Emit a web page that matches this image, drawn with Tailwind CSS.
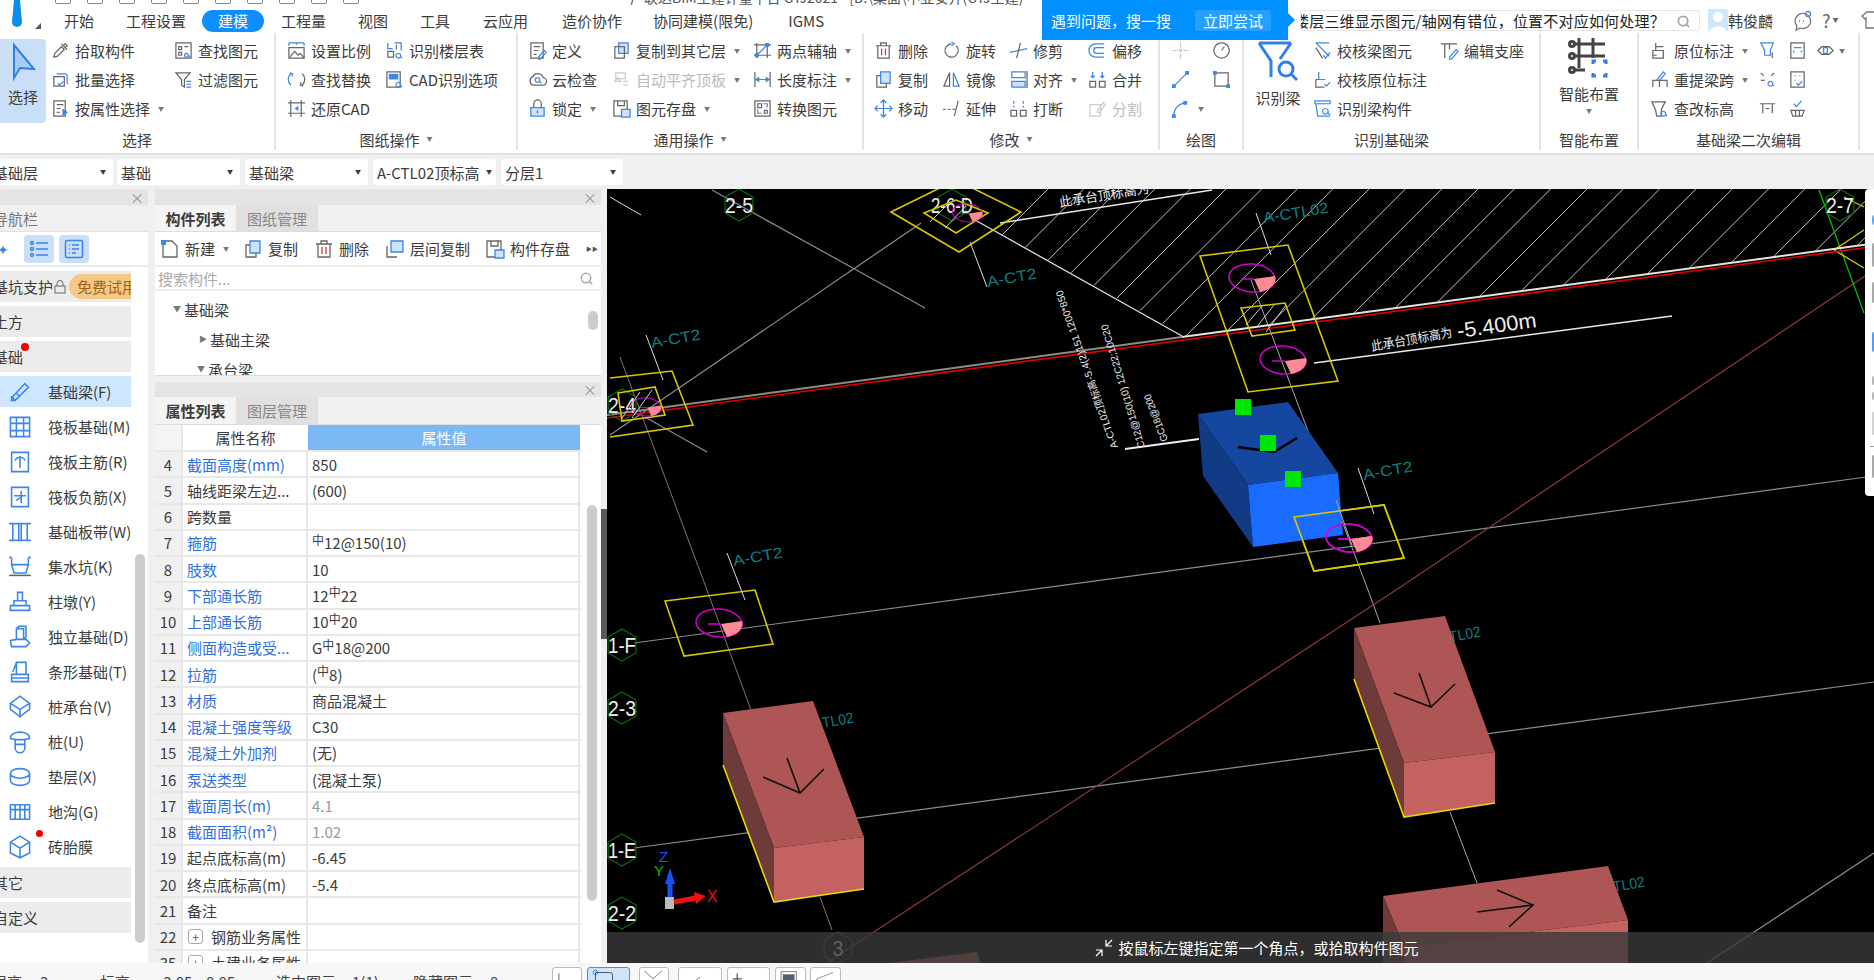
<!DOCTYPE html>
<html lang="zh-CN">
<head>
<meta charset="UTF-8">
<title>GTJ2021</title>
<script src="https://cdn.jsdelivr.net/npm/@tailwindcss/browser@4"></script>
</head>
<body class="w-[1874px] h-[980px] overflow-hidden bg-[#f0f0f0] text-[15px] leading-none text-[#3c3c3c] font-['Noto_Sans_CJK_SC','Noto_Sans',sans-serif]">

<!-- title strip, cut off by the top of the window -->
<header class="relative h-[8px] bg-white overflow-hidden flex">
  <div id="quick" class="flex gap-[16px] ml-[55px] -mt-[12px]"></div>
  <span class="absolute left-[630px] -top-[10px] text-[14px] text-[#555]">广联达BIM土建计量平台 GTJ2021 - [D:\桌面\中亚安井(GTJ土建)</span>
</header>

<!-- tabs -->
<nav class="relative h-[25px] bg-white flex items-center pl-[48px]">
  <svg class="absolute left-[8px] -top-[8px] w-[18px] h-[32px]" viewBox="0 0 18 32"><path d="M6 0h6l2 22a5 5 0 0 1-10 0z" fill="#0a8ee8"/></svg>
  <svg class="absolute left-[35px] top-[15px] w-[6px] h-[6px]" viewBox="0 0 6 6"><path d="M6 0v6H0z" fill="#555"/></svg>
  <span class="px-[16px]">开始</span>
  <span class="px-[16px]">工程设置</span>
  <span class="h-[22px] w-[62px] flex items-center justify-center rounded-full bg-[#0f8fff] text-white">建模</span>
  <span class="px-[17px]">工程量</span>
  <span class="px-[15px]">视图</span>
  <span class="px-[17px]">工具</span>
  <span class="pl-[16px] pr-[19px]">云应用</span>
  <span class="px-[15px]">造价协作</span>
  <span class="px-[16px]">协同建模(限免)</span>
  <span class="pl-[19px] pr-[18px]">IGMS</span>
</nav>

<!-- blue search hint and the search box lying over the title bar -->
<div class="absolute left-[1042px] top-0 w-[246px] h-[40px] bg-[#0090ff] text-white flex items-center pl-[9px] z-20">
  <span>遇到问题，搜一搜</span>
  <span class="ml-[24px] h-[21px] px-[8px] flex items-center bg-white/15 rounded-[2px]">立即尝试</span>
  <span class="absolute -right-[7px] top-[13px] border-y-[7px] border-y-transparent border-l-[7px] border-l-[#0090ff]"></span>
</div>
<div class="absolute left-[1300px] top-[10px] w-[400px] h-[21px] bg-white border border-[#e6e6e6] rounded-[3px] flex items-center overflow-hidden z-10 text-[#222]">
  <span class="whitespace-nowrap -ml-[7px] tracking-[0.2px]">楼层三维显示图元/轴网有错位，位置不对应如何处理？</span>
  <svg class="absolute right-[8px] top-[3px] w-[15px] h-[15px]" viewBox="0 0 16 16" fill="none" stroke="#aaa" stroke-width="2"><circle cx="7.5" cy="7.5" r="5"/><path d="M11 11l3 3"/></svg>
</div>
<div class="absolute left-[1708px] top-[8px] h-[24px] flex items-center z-10 whitespace-nowrap">
  <svg class="w-[20px] h-[22px] shrink-0" viewBox="0 0 20 22"><rect width="20" height="22" fill="#cfe6fb"/><circle cx="10" cy="8" r="5" fill="#fff"/><path d="M2 22c1-6 15-6 16 0z" fill="#fff"/></svg>
  <span class="shrink-0">韩俊麟</span>
  <svg class="ml-[19px] w-[22px] h-[22px] shrink-0" viewBox="0 0 22 22" fill="none" stroke="#777" stroke-width="1.3"><path d="M3 12a8 8 0 0 1 11-7 8 8 0 0 1 4 10 8 8 0 0 1-10 4l-4 2 1-4a8 8 0 0 1-2-5z"/><circle cx="16" cy="5" r="2.5" stroke="#4a90e2"/><path d="M7 12h1M11 12h1"/></svg>
  <span class="ml-[8px] text-[18px] text-[#666]">?</span>
  <span class="ml-[2px] text-[6px] text-[#666]">▼</span>
  <svg class="ml-[21px] w-[22px] h-[22px] shrink-0" viewBox="0 0 22 22" fill="none" stroke="#777" stroke-width="1.3"><path d="M7 3h8l5 4-3 3-1-1v10H6V9l-1 1-3-3z"/></svg>
</div>

<!-- ribbon -->
<section id="ribbon" class="relative h-[122px] bg-white border-b-2 border-[#e2e2e2] flex"></section>

<!-- layer selectors -->
<div class="h-[34px] bg-[#f0f0f0] flex items-center gap-[4px] overflow-hidden">
  <div class="w-[113px] h-[26px] bg-white rounded-[3px] flex items-center justify-between pr-[7px]"><span class="-ml-[7px]">基础层</span><span class="text-[6px]">▼</span></div>
  <div class="w-[123px] h-[26px] bg-white rounded-[3px] flex items-center justify-between pl-[4px] pr-[7px]"><span>基础</span><span class="text-[6px]">▼</span></div>
  <div class="w-[123px] h-[26px] ml-[1px] bg-white rounded-[3px] flex items-center justify-between pl-[4px] pr-[7px]"><span>基础梁</span><span class="text-[6px]">▼</span></div>
  <div class="w-[123px] h-[26px] ml-[1px] bg-white rounded-[3px] flex items-center justify-between pl-[4px] pr-[4px]"><span class="whitespace-nowrap">A-CTL02顶标高</span><span class="text-[6px]">▼</span></div>
  <div class="w-[122px] h-[26px] ml-[1px] bg-white rounded-[3px] flex items-center justify-between pl-[4px] pr-[7px]"><span>分层1</span><span class="text-[6px]">▼</span></div>
</div>

<main class="h-[774px] flex">
  <!-- navigation -->
  <aside class="relative w-[148px] shrink-0 bg-white overflow-hidden">
    <div class="h-[16px] bg-[#e4e4e4] relative"><span class="absolute right-[4px] top-[1px] text-[14px] text-[#999]">×</span></div>
    <div class="h-[27px] bg-[#f0f0f0] flex items-center text-[#777] border-b border-[#e2e2e2]"><span class="-ml-[7px]">导航栏</span></div>
    <div class="h-[35px] flex items-center border-b-2 border-[#eaeaea]">
      <span class="-ml-[3px] text-[#3b86e8] text-[14px] w-[27px]">✦</span>
      <span class="w-[30px] h-[28px] bg-[#c9def7] rounded-[4px] flex items-center justify-center"><svg class="w-[20px] h-[20px]" viewBox="0 0 20 20" fill="none" stroke="#3b86e8" stroke-width="1.5"><circle cx="3" cy="4" r="1.4"/><circle cx="3" cy="10" r="1.4"/><circle cx="3" cy="16" r="1.4"/><path d="M7 4h12M7 10h12M7 16h12"/></svg></span>
      <span class="ml-[5px] w-[30px] h-[28px] bg-[#c9def7] rounded-[4px] flex items-center justify-center"><svg class="w-[20px] h-[20px]" viewBox="0 0 20 20" fill="none" stroke="#3b86e8" stroke-width="1.5"><rect x="1.5" y="1.5" width="17" height="17" rx="1.5"/><path d="M5 6h1M8 6h7M5 10h1M8 10h7M5 14h1M8 14h4"/></svg></span>
    </div>
    <div class="w-[131px] mt-[4px] flex flex-col gap-[4px]">
      <div class="relative h-[31px] bg-[#ececec] flex items-center overflow-hidden">
        <span class="-ml-[7px] whitespace-nowrap">基坑支护</span>
        <svg class="ml-[1px] w-[12px] h-[14px] shrink-0" viewBox="0 0 12 14" fill="none" stroke="#666"><rect x="1" y="6" width="10" height="7"/><path d="M3 6V3.5a3 3 0 0 1 6 0V6"/></svg>
        <span class="absolute left-[69px] top-[3px] w-[66px] h-[25px] bg-[#f3c888] rounded-l-full pl-[8px] flex items-center whitespace-nowrap text-[#a5610f]">免费试用</span>
      </div>
      <div class="h-[31px] bg-[#ececec] flex items-center"><span class="-ml-[7px]">土方</span></div>
      <div class="relative h-[31px] bg-[#ececec] flex items-center"><span class="-ml-[7px]">基础</span><span class="absolute left-[21px] top-[2px] w-[8px] h-[8px] rounded-full bg-[#f00000]"></span></div>
    </div>
    <div id="navList" class="w-[131px] mt-[4px] mb-[3px] flex flex-col"></div>
    <div class="w-[131px] flex flex-col gap-[4px]">
      <div class="h-[31px] bg-[#ececec] flex items-center"><span class="-ml-[7px]">其它</span></div>
      <div class="h-[31px] bg-[#ececec] flex items-center"><span class="-ml-[7px]">自定义</span></div>
    </div>
    <div class="absolute left-[135px] top-[365px] w-[10px] h-[389px] rounded-full bg-[#cccccc]"></div>
  </aside>
  <div class="w-[7px] shrink-0 bg-[#f0f0f0]"></div>

  <!-- component list and properties -->
  <div class="w-[446px] shrink-0 flex flex-col gap-[6px]">
    <div class="relative h-[187px] bg-white border-b border-[#ddd] overflow-hidden">
      <div class="h-[16px] bg-[#e4e4e4] relative"><span class="absolute right-[4px] top-[1px] text-[14px] text-[#999]">×</span></div>
      <div class="h-[27px] flex bg-[#f0f0f0] border-b border-[#ddd]">
        <span class="w-[81px] flex items-center justify-center font-bold bg-[#f4f4f4]">构件列表</span>
        <span class="w-[82px] flex items-center justify-center bg-[#e0e0e0] text-[#888]">图纸管理</span>
      </div>
      <div id="compBar" class="relative h-[35px] flex items-center pl-[5px] border-b-2 border-[#eee]"></div>
      <div class="relative h-[24px] flex items-center pl-[3px] text-[#aaa] border-b-2 border-[#eee]">搜索构件...
        <svg class="absolute right-[7px] top-[4px] w-[15px] h-[15px]" viewBox="0 0 16 16" fill="none" stroke="#aaa" stroke-width="1.6"><circle cx="7.5" cy="7.5" r="5"/><path d="M11 11l3 3"/></svg>
      </div>
      <div class="relative pt-[3px]">
        <div class="h-[30px] flex items-center pl-[18px]"><span class="text-[8px] text-[#777] mr-[3px]">▼</span>基础梁</div>
        <div class="h-[30px] flex items-center pl-[44px]"><span class="text-[8px] text-[#777] mr-[3px]">▶</span>基础主梁</div>
        <div class="h-[30px] flex items-center pl-[42px]"><span class="text-[8px] text-[#777] mr-[3px]">▼</span>承台梁</div>
        <div class="absolute left-[433px] top-[20px] w-[10px] h-[19px] rounded-full bg-[#ccc]"></div>
      </div>
    </div>
    <div class="relative flex-1 bg-white overflow-hidden">
      <div class="h-[15px] bg-[#e4e4e4] relative"><span class="absolute right-[4px] top-0 text-[14px] text-[#999]">×</span></div>
      <div class="h-[28px] flex bg-[#f0f0f0] border-b border-[#ddd]">
        <span class="w-[81px] flex items-center justify-center font-bold bg-[#f4f4f4]">属性列表</span>
        <span class="w-[82px] flex items-center justify-center bg-[#e0e0e0] text-[#888]">图层管理</span>
      </div>
      <div class="h-[25px] flex items-stretch">
        <span class="w-[28px] bg-[#f4f4f4] border-r-2 border-[#e6e6e6]"></span>
        <span class="w-[125px] flex items-center justify-center">属性名称</span>
        <span class="w-[272px] flex items-center justify-center bg-[#7cb8f6] text-white">属性值</span>
      </div>
      <div id="propRows" class="w-[426px]"></div>
      <div class="absolute left-[432px] top-[123px] w-[10px] h-[396px] rounded-full bg-[#ccc]"></div>
    </div>
  </div>
  <div class="w-[6px] shrink-0 bg-[#f0f0f0] flex flex-col"><span class="mt-[320px] h-[130px] bg-[#5a5a5a]"></span></div>

  <!-- drawing area -->
  <div class="relative flex-1 bg-black overflow-hidden">
    <svg id="cad" class="block w-[1267px] h-[774px]" viewBox="607 189 1267 774" fill="none" font-family="'Liberation Sans','Noto Sans CJK SC',sans-serif">
      <defs>
        <g id="pile">
          <ellipse rx="23" ry="14" stroke="#d000d0" stroke-width="1.5" transform="rotate(5)"/>
          <path d="M2 1 L23 -2 A23 14 0 0 1 8 14 Z" fill="#ff8a95"/>
          <path d="M-11 1 L2 1" stroke="#d000d0" stroke-width="1.5"/>
        </g>
      </defs>
      <g id="hatch" stroke="#c4c4c4" stroke-width="1"></g>
      <!-- axis lines -->
      <g stroke="#8c8c8c" stroke-width="1.2">
        <path d="M634 643L1874 476"/>
        <path d="M634 848L1874 682"/>
        <path d="M712 190L925 308"/>
        <path d="M921 223L610 435"/>
        <path d="M645 417L707 452"/>
        <path d="M1707 963L1874 853"/>
      </g>
      <path d="M610 197L641 215" stroke="#ddd"/>
      <path d="M975 220L1182 336" stroke="#ddd" stroke-width="1.3"/>
      <path d="M620 357L707 590L751 710M820 897L832 930" stroke="#8a7070"/>
      <path d="M1251 280L1368 590L1380 623M1450 812L1477 883" stroke="#aaa"/>
      <path d="M1874 270L1396 590L828 962" stroke="#8a3a3a" stroke-width="1.2"/>
      <path d="M1819 190L1864 313" stroke="#00c000" stroke-width="1.3"/>
      <path d="M1834 250L1864 230M1834 250L1864 268M1844 197L1864 207" stroke="#d8c800" stroke-width="1.3"/>

      <!-- slab edge -->
      <path d="M607 415L1182 337" stroke="#8c8c8c" stroke-width="2"/>
      <path d="M1182 337L1874 243.500" stroke="#e4e4e4" stroke-width="2"/>
      <path d="M607 418L1874 246.500" stroke="#e00000" stroke-width="1.6"/>

      <!-- level notes -->
      <path d="M1000 223L1212 190M1314 363L1672 316" stroke="#e8e8e8" stroke-width="1.5"/>
      <text x="1060" y="207" font-size="13" fill="#eee" transform="rotate(-9 1060 207)">此承台顶标高为</text>
      <text x="1372" y="351" font-size="13" fill="#eee" textLength="82" lengthAdjust="spacingAndGlyphs" transform="rotate(-10 1372 351)">此承台顶标高为</text>
      <text x="1458" y="338" font-size="21" fill="#eee" textLength="80" lengthAdjust="spacingAndGlyphs" transform="rotate(-8 1458 338)">-5.400m</text>
      <path d="M1125 449L1199 439" stroke="#eee" stroke-width="2"/>
      <g font-size="10" fill="#eee">
        <text x="1118" y="447" textLength="167" lengthAdjust="spacingAndGlyphs" transform="rotate(-109.600 1118 447)">A-CTL02顶标高-5.4(2)151 1200*850</text>
        <text x="1145" y="447" textLength="129" lengthAdjust="spacingAndGlyphs" transform="rotate(-107 1145 447)">C12@150(10) 12C22;10C20</text>
        <text x="1168" y="440" textLength="50" lengthAdjust="spacingAndGlyphs" transform="rotate(-111 1168 440)">GC18@200</text>
      </g>

      <!-- teal labels with leaders -->
      <g stroke="#ddd">
        <path d="M646 335L663 380M970 242L987 287M727 553L745 600M1358 468L1374 514M1256 213L1271 255"/>
      </g>
      <g font-size="15" fill="#0b7f82">
        <text x="652" y="348" textLength="50" lengthAdjust="spacingAndGlyphs" transform="rotate(-10 652 348)">A-CT2</text>
        <text x="988" y="287" textLength="50" lengthAdjust="spacingAndGlyphs" transform="rotate(-10 988 287)">A-CT2</text>
        <text x="734" y="566" textLength="50" lengthAdjust="spacingAndGlyphs" transform="rotate(-10 734 566)">A-CT2</text>
        <text x="1364" y="480" textLength="50" lengthAdjust="spacingAndGlyphs" transform="rotate(-10 1364 480)">A-CT2</text>
        <text x="1264" y="223" textLength="66" lengthAdjust="spacingAndGlyphs" transform="rotate(-9 1264 223)">A-CTL02</text>
        <text x="823" y="728" textLength="32" lengthAdjust="spacingAndGlyphs" transform="rotate(-10 823 728)">TL02</text>
        <text x="1450" y="642" textLength="32" lengthAdjust="spacingAndGlyphs" transform="rotate(-10 1450 642)">TL02</text>
        <text x="1614" y="892" textLength="32" lengthAdjust="spacingAndGlyphs" transform="rotate(-10 1614 892)">TL02</text>
      </g>

      <!-- axis bubbles -->
      <g id="bubbles" stroke="#0a6e0a" stroke-width="1.2"></g>

      <!-- pile caps -->
      <g stroke="#d8c800" stroke-width="1.6">
        <path d="M1200 256L1288 245L1338 381L1248 392Z"/>
        <path d="M1241 308L1285 303L1295 330L1252 336Z"/>
        <path d="M1294 517L1384 505L1404 558L1314 571Z"/>
        <path d="M665 601L755 590L773 644L684 656Z"/>
        <path d="M610 378L672 371L693 425L610 437"/>
        <path d="M618 393L655 387L665 415L622 421Z"/>
        <path d="M891 212L956 180L1021 212L959 252Z"/>
        <path d="M924 213L956 200L988 213L956 233Z"/>
      </g>
      <use href="#pile" x="1252" y="278"/>
      <use href="#pile" x="1283" y="360"/>
      <use href="#pile" x="1349" y="538"/>
      <use href="#pile" x="719" y="623"/>
      <use href="#pile" x="640" y="406" transform="translate(230 143) scale(.65)"/>
      <use href="#pile" x="956" y="212" transform="translate(346 75) scale(.65)"/>
      <path d="M1246 325L1262 306M1256 328L1274 305M1266 332L1286 305M622 418L640 392M632 418L652 390M930 222L948 204M945 228L966 206" stroke="#ccc"/>

      <!-- selected beam -->
      <path d="M1198 414L1288 402L1338 473L1248 485Z" fill="#1546a0"/>
      <path d="M1198 414L1248 485L1253 547L1203 476Z" fill="#123a85"/>
      <path d="M1248 485L1338 473L1343 535L1253 547Z" fill="#1a6bff"/>
      <path d="M1238 447L1274 452L1297 438" stroke="#000" stroke-width="2.500"/>
      <path d="M1294 517L1384 505L1404 558L1314 571Z" stroke="#d8c800" stroke-width="1.6"/>
      <use href="#pile" x="1349" y="538"/>
      <path d="M1336 500L1352 545" stroke="#aaa"/>
      <g fill="#00e600">
        <rect x="1235" y="399" width="16" height="16"/>
        <rect x="1260" y="435" width="16" height="16"/>
        <rect x="1285" y="471" width="16" height="16"/>
      </g>

      <!-- other beams -->
      <g>
        <path d="M723 713L813 701L864 837L774 848Z" fill="#ae5656"/>
        <path d="M723 713L774 848L774 902L723 765Z" fill="#6e3a3a"/>
        <path d="M774 848L864 837L864 889L774 902Z" fill="#c46262"/>
        <path d="M723 765L774 902L864 889" stroke="#e8d800" stroke-width="1.6"/>
        <path d="M787 758L800 793M763 777L800 793L824 769" stroke="#111" stroke-width="1.6"/>

        <path d="M1354 628L1445 616L1495 752L1404 763Z" fill="#ae5656"/>
        <path d="M1354 628L1404 763L1404 817L1354 679Z" fill="#6e3a3a"/>
        <path d="M1404 763L1495 752L1495 803L1404 817Z" fill="#c46262"/>
        <path d="M1354 679L1404 817L1495 803" stroke="#e8d800" stroke-width="1.6"/>
        <path d="M1419 673L1431 707M1394 693L1431 707L1455 684" stroke="#111" stroke-width="1.6"/>

        <path d="M1383 896L1608 866L1628 920L1404 947Z" fill="#ae5656"/>
        <path d="M1383 896L1404 947L1404 963L1383 963Z" fill="#6e3a3a"/>
        <path d="M1404 947L1628 920L1628 963L1404 963Z" fill="#c46262"/>
        <path d="M1477 912L1533 905M1497 890L1533 905L1509 927" stroke="#111" stroke-width="1.6"/>
        <path d="M888 963L977 952L981 963Z" fill="#ae5656"/>
      </g>

      <!-- axes gizmo -->
      <path d="M670 905V880" stroke="#00c000" stroke-width="3"/>
      <path d="M670 902V882" stroke="#1a4fff" stroke-width="5"/>
      <path d="M665 884L670 868L675 884Z" fill="#1a4fff"/>
      <rect x="665" y="897" width="9" height="12" fill="#bbb"/>
      <path d="M674 902L696 898" stroke="#f01010" stroke-width="5"/>
      <path d="M694 892L706 896L696 904Z" fill="#f01010"/>
      <text x="659" y="862" font-size="15" fill="#1a4fff">Z</text>
      <text x="654" y="876" font-size="15" fill="#00c000">Y</text>
      <text x="707" y="902" font-size="16" fill="#f01010">X</text>
    </svg>

    <!-- command hint over the drawing -->
    <div class="absolute left-0 right-0 top-[743px] h-[31px] bg-[#3a3a3a]/80 flex items-center justify-center text-white pl-[32px]">
      <svg class="mr-[4px] w-[20px] h-[20px]" viewBox="0 0 20 20" fill="none" stroke="#fff" stroke-width="1.2"><path d="M12 2v6h6M12 8l6-6M8 18v-6H2M8 12l-6 6"/></svg>
      <span>按鼠标左键指定第一个角点，或拾取构件图元</span>
    </div>
    <!-- side tool strip -->
    <div class="absolute left-[1258px] top-0 w-[20px] h-[307px] bg-white rounded-l-[4px]">
      <span class="absolute left-[7px] top-[26px] w-[6px] h-[10px] rounded-l-[3px] bg-[#6aa8ee]"></span>
      <span class="absolute left-[7px] top-[54px] w-[6px] h-[24px] rounded-l-[2px] bg-[#a8a8a8]"></span>
      <span class="absolute left-[7px] top-[93px] w-[6px] h-[21px] rounded-l-[2px] bg-[#a8a8a8]"></span>
      <span class="absolute left-[7px] top-[143px] w-[6px] h-[20px] rounded-l-[2px] bg-[#5b9cf0]"></span>
      <span class="absolute left-[7px] top-[187px] w-[6px] h-[9px] rounded-l-[2px] bg-[#b8b8b8]"></span>
      <span class="absolute left-[7px] top-[203px] w-[6px] h-[8px] rounded-l-[2px] bg-[#b8b8b8]"></span>
      <span class="absolute left-[7px] top-[223px] w-[6px] h-[23px] bg-[#d4d4d4]"></span>
      <span class="absolute left-[5px] top-[257px] w-[8px] h-[1px] bg-[#999]"></span>
      <span class="absolute left-[7px] top-[266px] w-[6px] h-[23px] rounded-l-[2px] bg-[#a8a8a8]"></span>
    </div>
  </div>
</main>

<!-- status bar, cut off by the bottom of the window -->
<footer class="relative h-[17px] bg-[#f7f7f7] overflow-hidden text-[#444]">
  <span class="absolute -left-[8px] top-[11px]">层高</span>
  <span class="absolute left-[40px] top-[11px]">3</span>
  <span class="absolute left-[100px] top-[11px]">标高</span>
  <span class="absolute left-[158px] top-[11px]">-3.05~-0.05</span>
  <span class="absolute left-[276px] top-[11px]">选中图元</span>
  <span class="absolute left-[352px] top-[11px]">1(1)</span>
  <span class="absolute left-[413px] top-[11px]">隐藏图元</span>
  <span class="absolute left-[490px] top-[11px]">0</span>
  <div class="absolute left-[552px] top-[4px] w-[30px] h-[20px] bg-white border border-[#bbb] rounded-[3px]"><svg class="w-full h-full" viewBox="0 0 30 20" fill="none" stroke="#555"><path d="M6 6v10h6"/></svg></div>
  <div class="absolute left-[587px] top-[4px] w-[43px] h-[20px] bg-[#cfe3fb] border border-[#4a90e2] rounded-[3px]"><svg class="w-full h-full" viewBox="0 0 43 20" fill="none" stroke="#444"><path d="M7 5h16a3 3 0 0 1 3 3v12M7 5v15"/><circle cx="7" cy="5" r="2.500" stroke="#2f80ed"/></svg></div>
  <div class="absolute left-[639px] top-[4px] w-[30px] h-[20px] bg-white border border-[#bbb] rounded-[3px]"><svg class="w-full h-full" viewBox="0 0 30 20" fill="none" stroke="#777"><path d="M4 3l10 9 10-9"/></svg></div>
  <div class="absolute left-[678px] top-[4px] w-[44px] h-[20px] bg-white border border-[#bbb] rounded-[3px]"><svg class="w-full h-full" viewBox="0 0 44 20" fill="none" stroke="#666"><path d="M15 16l7-6"/></svg></div>
  <div class="absolute left-[727px] top-[4px] w-[43px] h-[20px] bg-white border border-[#bbb] rounded-[3px]"><svg class="w-full h-full" viewBox="0 0 43 20" fill="none" stroke="#555" stroke-width="1.4"><path d="M9 6v12M4 12h10"/></svg></div>
  <div class="absolute left-[775px] top-[4px] w-[31px] h-[20px] bg-white border border-[#bbb] rounded-[3px]"><svg class="w-full h-full" viewBox="0 0 31 20"><path d="M5 4h17v16H5z" fill="none" stroke="#777"/><path d="M7 7h13v13H7z" fill="#55606e"/></svg></div>
  <div class="absolute left-[810px] top-[4px] w-[31px] h-[20px] bg-white border border-[#bbb] rounded-[3px]"><svg class="w-full h-full" viewBox="0 0 31 20" fill="none" stroke="#888"><path d="M6 20v-8l18-7"/></svg></div>
</footer>

<script>
// icon spec: "g path; b path" where the letter picks the stroke
const strokes = {
  g: 'stroke="#666" fill="none"',
  b: 'stroke="#3b86e8" fill="none"',
  f: 'stroke="#3b86e8" fill="#cfe2fb"',
  w: 'stroke="#666" fill="#fff"',
  r: 'stroke="#e03030" fill="none"',
  h: 'stroke="#ccc" fill="none"',
  s: 'stroke="none" fill="#3b86e8"'
};
function icon(spec, cls) {
  const parts = spec.split(';').map(p => `<path ${strokes[p.trim()[0]]} d="${p.trim().slice(2)}"/>`).join('');
  return `<svg class="${cls}" viewBox="0 0 20 20" stroke-width="1.3">${parts}</svg>`;
}
const SM = 'w-[19px] h-[19px] shrink-0';
const ARROW = '<span class="ml-[8px] text-[6px] text-[#777]">▼</span>';

const I = {
  pick: 'g M3 17l1-4 7-7 3 3-7 7z;g M11 3l6 6M13 5l2-2 2 2-2 2',
  batch: 'b M6 4h9a2 2 0 0 1 2 2v9;w M3 7h11v10H3z;b M7 14l2 2 4-4',
  attr: 'g M3 2h12v16H3z;g M6 6h7M6 10h4M6 14h3;s M12 10l6 4-6 4z',
  find: 'g M2 2h16v16H2z;g M5 6h3v3H5zM11 6h4M5 12h3v3H5z;b M13 13a2 2 0 1 0 .1 0M15 15l2 2',
  filter: 'g M2 3h15l-6 7v8l-3-2v-6z;b M13 12h5M13 15h5M13 18h5',
  scale: 'b M2 2h16M2 2v3M18 2v3M10 2v2;g M2 7h16v11H2z;g M3 17l5-6 4 4 2-2 4 5',
  floor: 'b M3 2v6h5M10 2h7v8;g M3 11h6v6H3zM12 4v5;b M14 13a2.500 2.500 0 1 0 .1 0M16 16l2 2',
  swap: 'b M4 4a8 8 0 0 0 0 12;g M16 4a8 8 0 0 1 0 12;b M3 3l3 1-1 3;g M17 17l-3-1 1-3',
  cad: 'g M2 2h14v16H2z;s M4 4h10v6H4z;b M14 13a2.500 2.500 0 1 0 .1 0M16 16l2 2',
  restore: 'g M4 1v18M15 1v18M1 4h18M1 15h18;s M12 7l-4 3 4 3z',
  define: 'g M3 2h13v16H3z;g M6 6h7M6 10h5M6 14h3;b M11 17l6-7 2 2-6 7h-2z',
  cloud: 'g M5 16a5 5 0 0 1 0-9 6 6 0 0 1 11 1 4 4 0 0 1-1 8z;b M10 8a2.500 2.500 0 1 0 .1 0M12 12l2 2',
  lock: 'g M6 9V5a4 4 0 0 1 8 0v4;f M3 9h14v9H3z;g M10 12v3',
  copyf: 'f M7 2h10v11H7z;g M3 6h10v12H3z',
  align: 'h M4 3h10v6H4z;h M3 12l3-4 3 4z;h M12 12h5M12 16h5',
  save: 'g M2 2h14v16H2z;g M6 2v5h7V2;f M10 11h9v8h-9z',
  twoaxis: 'g M4 2v16M15 2v16M1 4h18M1 15h18;b M4 15L15 4;s M2 13h4v4H2zM13 2h4v4h-4z',
  dim: 'g M2 2v16M18 2v16;b M3 10h14M3 10l3-2v4zM17 10l-3-2v4z',
  convert: 'g M2 2h16v16H2z;g M5 5h4v4H5zM12 12h3v3h-3z;b M11 5h4v4M9 15H5v-4',
  del: 'g M4 5h12v13H4zM2 5h16M7 5V2h6v3;r M8 8v7M12 8v7',
  rotate: 'g M15 5a7 7 0 1 1-5-2;b M10 1l3 2-3 2',
  trim: 'b M1 12L19 8;g M12 2L8 18',
  offset: 'b M17 3H8a7 7 0 0 0 0 14h9;b M17 7H9a3 3 0 0 0 0 6h8',
  copy: 'g M3 6h10v12H3z;f M7 2h10v12H7z',
  mirror: 'g M8 3L2 17h6z;b M12 3l6 14h-6z',
  alignv: 'b M3 2h14v6H3z;f M3 12h14v6H3z;g M19 1v18',
  merge: 'g M2 12h6v6H2zM12 12h6v6h-6z;b M5 2v6M15 2v6M3 6l2 2 2-2M13 6l2 2 2-2',
  move: 'b M10 1v18M1 10h18M7 4l3-3 3 3M7 16l3 3 3-3M4 7l-3 3 3 3M16 7l3 3-3 3',
  extend: 'b M1 11h3M6 11h3M11 11h3;g M13 18l4-16',
  brk: 'g M2 12h6v6H2zM12 12h6v6h-6z;b M5 2v3M5 7v2M15 2v3M15 7v2',
  split: 'h M2 6h11v12H2zM10 12l6-8 2 2-6 8h-2z',
  dot: 'h M1 10h6M13 10h6M10 1v6M10 13v6;h M9 9h2v2H9z',
  clock: 'g M10 2a8 8 0 1 0 .1 0;b M10 10l3-4',
  line: 'b M3 17L17 3;s M1 15h4v4H1zM15 1h4v4h-4z',
  rect: 'g M3 3h14v14H3z;s M1 1h4v4H1zM15 15h4v4h-4z',
  arc: 'b M3 18c0-8 5-13 12-14;s M1 16h4v4H1zM13 2h4v4h-4z',
  checkbeam: 'b M3 2h14M3 2l14 14;g M3 7l7 11;b M11 15l2 3 5-6',
  checkmark: 'g M3 10h6M3 10v8h9;b M6 2v8h7;b M12 15l2 2 4-4',
  recog: 'b M2 2h16v3H2zM3 5l2 13h13;b M13 10a3 3 0 1 0 .1 0M15 14l3 3',
  bearing: 'g M1 3h17M5 3v15M10 3v6;b M10 17l7-8 2 2-7 8h-2z',
  spot: 'g M3 10h11v8H3z;g M6 10V2M6 6h8;b M2 15h5',
  lift: 'g M3 18v-7h15v7M10 11v7;b M7 11l7-9 2 2-6 7',
  level: 'g M2 3h14l-4 8v7H7l-1-6z;b M14 13a2.500 2.500 0 1 0 .1 0M16 16l2 2',
  shape: 'b M3 2h13l-3 8v5H7v-5z;g M15 12v6',
  stripe: 'g M3 2h14v16H3z;b M6 7h8M6 10v2M14 10v2',
  eye: 'g M2 10l4-4h8l4 4-4 4H6z;b M8 7h4v6H8z',
  star: 'g M3 3l3 3M17 3l-3 3M3 11h4;b M13 12a2.500 2.500 0 1 0 .1 0M15 15l2 2',
  dots: 'g M3 2h14v16H3z;b M7 6h1M12 6h1M7 11h1;b M9 14l2 2 4-4',
  bar: 'g M2 5h16M5 5v10M15 5v10M8 10h4',
  tick: 'g M3 12h14l-2 6H5z;b M6 5l3 3 5-6;g M8 12v6M12 12v6',
  newf: 'g M3 2h9l5 5v11H3z;s M1 1h5v5H1z',
  copy2: 'g M2 7v11h10;f M6 2h12v11H6z',
  trash: 'g M4 5h12v13H4zM2 5h16M7 5V2h6v3;r M8 8v7M12 8v7'
};

// [icon, label, disabled?, arrow?]
function item(i, text, opts = {}) {
  const txt = opts.off ? 'text-[#bbb]' : '';
  return `<div class="h-[29px] flex items-center whitespace-nowrap">${icon(I[i] || i, SM)}${text ? `<span class="ml-[5px] ${txt}">${text}</span>` : ''}${opts.more ? ARROW : ''}</div>`;
}
function col(left, items) {
  return `<div class="absolute top-[3px] flex flex-col" style="left:${left}px">${items.join('')}</div>`;
}
function group(width, label, more, inner) {
  return `<div class="relative shrink-0 h-[117px] border-r-2 border-[#e4e4e4]" style="width:${width}px">${inner}
    <div class="absolute left-0 right-0 top-[95px] h-[22px] flex items-center justify-center">${label}${more ? '<span class="ml-[7px] text-[6px] text-[#777]">▼</span>' : ''}</div></div>`;
}

document.getElementById('ribbon').innerHTML = [
  group(276, '选择', false,
    `<div class="absolute left-0 top-[6px] w-[46px] h-[84px] bg-[#c9def7] rounded-r-[4px] flex flex-col items-center">
       <svg class="w-[30px] h-[40px] mt-[3px]" viewBox="0 0 30 40"><path d="M6 3L26 27L12 26L6 36Z" fill="#a8cdf5" stroke="#2f80ed" stroke-width="2"/></svg>
       <span class="mt-[7px]">选择</span></div>` +
    col(51, [item('pick', '拾取构件'), item('batch', '批量选择'), item('attr', '按属性选择', {more: 1})]) +
    col(174, [item('find', '查找图元'), item('filter', '过滤图元')])),
  group(242, '图纸操作', true,
    col(11, [item('scale', '设置比例'), item('swap', '查找替换'), item('restore', '还原CAD')]) +
    col(109, [item('floor', '识别楼层表'), item('cad', 'CAD识别选项')])),
  group(346, '通用操作', true,
    col(10, [item('define', '定义'), item('cloud', '云检查'), item('lock', '锁定', {more: 1})]) +
    col(94, [item('copyf', '复制到其它层', {more: 1}), item('align', '自动平齐顶板', {off: 1, more: 1}), item('save', '图元存盘', {more: 1})]) +
    col(235, [item('twoaxis', '两点辅轴', {more: 1}), item('dim', '长度标注', {more: 1}), item('convert', '转换图元')])),
  group(296, '修改', true,
    col(10, [item('del', '删除'), item('copy', '复制'), item('move', '移动')]) +
    col(78, [item('rotate', '旋转'), item('mirror', '镜像'), item('extend', '延伸')]) +
    col(145, [item('trim', '修剪'), item('alignv', '对齐', {more: 1}), item('brk', '打断')]) +
    col(224, [item('offset', '偏移'), item('merge', '合并'), item('split', '分割', {off: 1})])),
  group(84, '绘图', false,
    col(11, [item('dot', ''), item('line', ''), item('arc', '', {more: 1})]) +
    col(52, [item('clock', ''), item('rect', '')])),
  group(297, '识别基础梁', false,
    `<div class="absolute left-[8px] top-[6px] w-[52px] flex flex-col items-center">
       <svg class="w-[44px] h-[44px]" viewBox="0 0 44 44" fill="none" stroke="#2f80ed" stroke-width="3"><path d="M3 4h32M3 4l12 18v16M35 4L24 20"/><circle cx="30" cy="30" r="7"/><path d="M35 35l6 6"/></svg>
       <span class="mt-[7px]">识别梁</span></div>` +
    col(69, [item('checkbeam', '校核梁图元'), item('checkmark', '校核原位标注'), item('recog', '识别梁构件')]) +
    col(196, [item('bearing', '编辑支座')])),
  group(98, '智能布置', false,
    `<div class="absolute left-0 right-0 top-[3px] flex flex-col items-center">
       <svg class="w-[44px] h-[44px]" viewBox="0 0 44 44" fill="none" stroke="#444" stroke-width="3"><path d="M12 2v30M26 2v20M6 8h32M6 20h32M6 34h12"/><circle cx="5" cy="8" r="2.500"/><circle cx="5" cy="20" r="2.500"/><circle cx="5" cy="34" r="2.500"/><path stroke="#2f80ed" d="M26 28v-3h3M36 25h3v3M39 37v3h-3M29 40h-3v-3"/></svg>
       <span class="mt-[6px]">智能布置</span><span class="mt-[7px] text-[6px] text-[#777]">▼</span></div>`),
  group(221, '基础梁二次编辑', false,
    col(11, [item('spot', '原位标注', {more: 1}), item('lift', '重提梁跨', {more: 1}), item('level', '查改标高')]) +
    col(119, [item('shape', ''), item('star', ''), item('bar', '')]) +
    col(149, [item('stripe', ''), item('dots', ''), item('tick', '')]) +
    col(177, [`<div class="h-[29px] flex items-center">${icon(I.eye, SM)}<span class="ml-[4px] text-[6px] text-[#777]">▼</span></div>`]))
].join('');

// clipped quick access icons
document.getElementById('quick').innerHTML = ['', '', '', '', '', '', '', '', '', ''].map(() =>
  '<span class="w-[16px] h-[16px] border border-[#888] rounded-[2px]"></span>').join('');

// component toolbar
const comp = [['newf', '新建', 1, 0], ['copy', '复制', 0, 14], ['trash', '删除', 0, 16], ['copy2', '层间复制', 0, 16], ['save', '构件存盘', 0, 15]];
document.getElementById('compBar').innerHTML = comp.map(([i, t, more, gap]) =>
  `<div class="flex items-center whitespace-nowrap" style="margin-left:${gap}px">${icon(I[i], 'w-[20px] h-[20px] shrink-0')}<span class="ml-[5px]">${t}</span>${more ? ARROW : ''}</div>`).join('') +
  '<span class="absolute right-[3px] top-[14px] text-[6px] text-[#555]">▶▶</span>';

// nav list
const nav = [
  ['b M4 14L14 3l3 3L6 17H3v-3zM3 14l3 3M7 11l3 3', '基础梁(F)', 1],
  ['b M2 2h16v16H2zM2 7h16M2 13h16M7 2v16M13 2v16', '筏板基础(M)'],
  ['b M3 2h14v16H3zM10 5v10M6 9a4 3 0 0 1 8 0', '筏板主筋(R)'],
  ['b M3 2h14v16H3zM5 9h10M11 5v10M7 13l4-3', '筏板负筋(X)'],
  ['b M1 3h18M1 17h18M4 3v14M9 3v14M11 3v14M16 3v14', '基础板带(W)'],
  ['b M3 2v6h14V2M3 2H1M17 2h2M3 8l2 7h10l2-7;g M1 17h18', '集水坑(K)'],
  ['b M8 2h4v7H8zM5 9h10v4H5zM2 13h16v4H2z', '柱墩(Y)'],
  ['b M7 3h6v9H7zM7 3l2-2h6v9l-2 2M2 13l5-1h8l3 3-3 3H3z', '独立基础(D)'],
  ['b M7 2h8v10H7zM3 12h14v6H3zM7 2L4 10M3 15h14', '条形基础(T)'],
  ['b M10 1l8 6-8 5-8-5zM2 7v5l8 6 8-6V7M10 12v7', '桩承台(V)'],
  ['b M2 7c0-7 16-7 16 0l-4 1H6zM6 8v7a4 4 0 0 0 8 0V8M6 12h8', '桩(U)'],
  ['b M2 7a8 4 0 1 0 16 0a8 4 0 1 0-16 0M2 7v6a8 4 0 0 0 16 0V7', '垫层(X)'],
  ['b M2 4h16v12H2zM2 8h16M6 4v12M10 4v12M14 4v12', '地沟(G)'],
  ['b M10 1l8 5v9l-8 4-8-4V6zM2 6l8 5 8-5M10 11v8', '砖胎膜']
];
document.getElementById('navList').innerHTML = nav.map(([ic, t, on], n) =>
  `<div class="relative flex items-center overflow-hidden whitespace-nowrap ${on ? 'bg-[#cfe6ff] h-[31px] mb-[2px]' : 'h-[35px]'}">
     <span class="w-[48px] pl-[8px] shrink-0">${icon(ic, 'w-[24px] h-[24px]')}</span><span>${t}</span>
     ${n === 13 ? '<span class="absolute left-[36px] top-[1px] w-[7px] h-[7px] rounded-full bg-[#f00000]"></span>' : ''}
   </div>`).join('');

// property table: [no, name, value, blue name?, gray value?]
const steel = '<span class="relative -top-[3px] text-[12px]">中</span>';
const props = [
  [4, '截面高度(mm)', '850', 1], [5, '轴线距梁左边...', '(600)'], [6, '跨数量', ''],
  [7, '箍筋', steel + '12@150(10)', 1], [8, '肢数', '10', 1], [9, '下部通长筋', '12' + steel + '22', 1],
  [10, '上部通长筋', '10' + steel + '20', 1], [11, '侧面构造或受...', 'G' + steel + '18@200', 1], [12, '拉筋', '(' + steel + '8)', 1],
  [13, '材质', '商品混凝土', 1], [14, '混凝土强度等级', 'C30', 1], [15, '混凝土外加剂', '(无)', 1],
  [16, '泵送类型', '(混凝土泵)', 1], [17, '截面周长(m)', '4.1', 1, 1], [18, '截面面积(m²)', '1.02', 1, 1],
  [19, '起点底标高(m)', '-6.45'], [20, '终点底标高(m)', '-5.4'], [21, '备注', ''],
  [22, '钢筋业务属性', '', 0, 0, 1], [35, '土建业务属性', '', 0, 0, 1]
];
const plus = '<span class="mr-[8px] ml-[1px] w-[15px] h-[15px] border border-[#aaa] rounded-[3px] flex items-center justify-center text-[12px] text-[#555]">+</span>';
document.getElementById('propRows').innerHTML = props.map(([no, name, val, blue, gray, tree]) =>
  `<div class="h-[26.250px] flex items-stretch border-t-2 border-[#e8e8e8] whitespace-nowrap">
     <span class="w-[28px] flex items-center justify-center bg-[#f0f0f0] border-r-2 border-[#e6e6e6]">${no}</span>
     <span class="w-[125px] pl-[4px] flex items-center border-r-2 border-[#e6e6e6] ${blue ? 'text-[#2f6fe0]' : ''}">${tree ? plus : ''}${name}</span>
     <span class="w-[272px] pl-[4px] flex items-center border-r-2 border-[#e6e6e6] ${gray ? 'text-[#999]' : ''}">${val}</span>
   </div>`).join('');

// hatching, 45 degrees up to the right
const yAt = x => 415 - (x - 607) * 0.1354;
let h = '';
for (let k = 0; k < 9; k++) {
  const x = 1002 + k * 23, y = 235 + k * 12.6;
  h += `<path d="M${x} ${y}L${x + y - 189} 189"/>`;
}
for (let x = 1227; x < 1874; x += 42) {
  const y = yAt(x);
  h += `<path d="M${x} ${y}L${x + y - 189} 189"/>`;
}
document.getElementById('hatch').innerHTML = h;

// axis bubbles
const bubbles = [[739, 205, '2-5'], [952, 205, '2-6-D'], [1840, 205, '2-7'], [622, 405, '2-4'], [622, 645, '1-F'], [622, 708, '2-3'], [622, 850, '1-E'], [622, 913, '2-2'], [838, 948, '3']];
document.getElementById('bubbles').innerHTML = bubbles.map(([x, y, t]) => {
  const r = 16;
  const pts = [[0, -r], [r * .87, -r / 2], [r * .87, r / 2], [0, r], [-r * .87, r / 2], [-r * .87, -r / 2]].map(p => `${x + p[0]},${y + p[1]}`).join(' ');
  const len = t.length > 3 ? 42 : t.length > 1 ? 28 : 11;
  return `<polygon points="${pts}"/><text x="${x}" y="${y + 8}" font-size="22" fill="#eee" stroke="none" text-anchor="middle" textLength="${len}" lengthAdjust="spacingAndGlyphs">${t}</text>`;
}).join('');
</script>
</body>
</html>
